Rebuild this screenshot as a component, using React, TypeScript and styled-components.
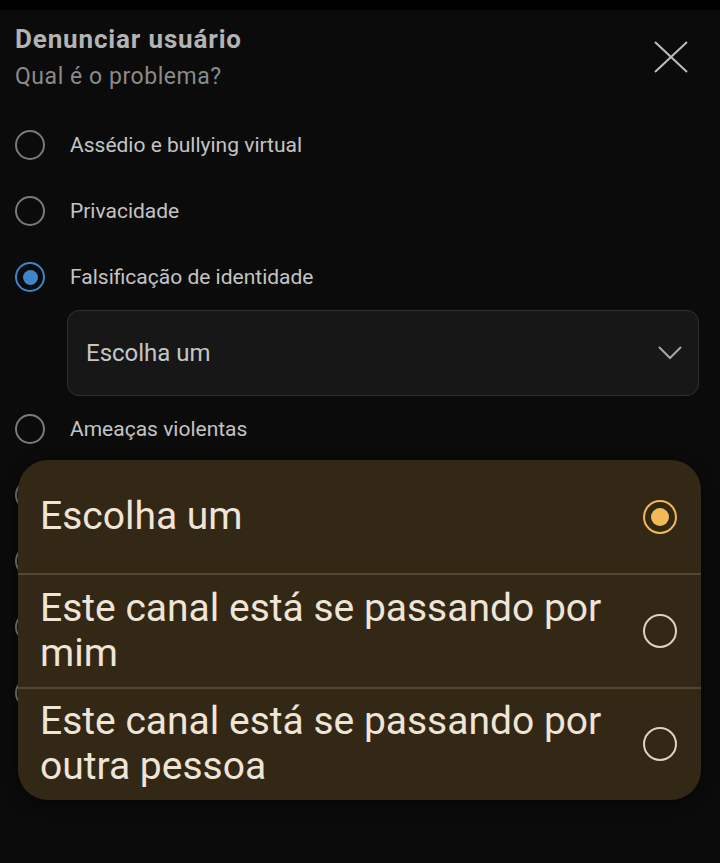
import React from "react";
import styled, { createGlobalStyle } from "styled-components";

const GlobalStyle = createGlobalStyle`
  html, body {
    margin: 0;
    padding: 0;
    background: #0b0b0b;
    font-family: Roboto, "Noto Sans", "Liberation Sans", sans-serif;
  }
  * { box-sizing: border-box; }
`;

const Screen = styled.div`
  position: relative;
  width: 720px;
  height: 863px;
  overflow: hidden;
  background: #0b0b0b;
`;

const StatusBar = styled.div`
  height: 10px;
  background: #000;
`;

const Sheet = styled.div`
  padding: 14px 21px 0 15px;
`;

const Header = styled.div`
  display: flex;
  justify-content: space-between;
  align-items: flex-start;
`;

const TitleBlock = styled.div`
  display: flex;
  flex-direction: column;
  gap: 8px;
`;

const Title = styled.h1`
  margin: 0;
  font-size: 26px;
  line-height: 30px;
  font-weight: 700;
  letter-spacing: 0.85px;
  color: #b3b3b3;
`;

const Subtitle = styled.p`
  margin: 0;
  font-size: 23px;
  line-height: 30px;
  letter-spacing: 0.55px;
  color: #8a8a8a;
`;

const CloseButton = styled.button`
  margin: 17px 11px 0 0;
  padding: 0;
  width: 34px;
  height: 32px;
  border: 0;
  background: transparent;
  display: flex;
  align-items: center;
  justify-content: center;
`;

const List = styled.div`
  margin-top: 20px;
  display: flex;
  flex-direction: column;
`;

const Row = styled.div`
  height: 66px;
  display: flex;
  align-items: center;
  gap: 25px;
`;

const Radio = styled.span<{ $checked?: boolean }>`
  flex: none;
  width: 30px;
  height: 30px;
  border-radius: 50%;
  border: 2.5px solid ${(p) => (p.$checked ? "#3d86c9" : "#7a7a7a")};
  display: flex;
  align-items: center;
  justify-content: center;
  &::after {
    content: "";
    display: ${(p) => (p.$checked ? "block" : "none")};
    width: 15px;
    height: 15px;
    border-radius: 50%;
    background: #3d86c9;
  }
`;

const RowLabel = styled.span`
  font-size: 21px;
  color: #c4c4c4;
`;

const Select = styled.div`
  margin-left: 52px;
  height: 86px;
  border-radius: 12px;
  border: 1px solid #303030;
  background: #171717;
  display: flex;
  align-items: center;
  justify-content: space-between;
  padding: 0 16px 0 18px;
`;

const SelectText = styled.span`
  font-size: 24px;
  color: #c6c6c6;
`;

const Popup = styled.div`
  position: absolute;
  top: 460px;
  left: 18px;
  width: 683px;
  border-radius: 30px;
  background: #332716;
  overflow: hidden;
  box-shadow: 0 4px 16px rgba(0, 0, 0, 0.5);
`;

const PopupItem = styled.div`
  height: 113.3px;
  display: flex;
  align-items: center;
  justify-content: space-between;
  padding: 0 24px 0 22px;
  gap: 20px;
  & + & {
    border-top: 2px solid #54462f;
  }
`;

const PopupText = styled.span`
  font-size: 39px;
  line-height: 45px;
  color: #efe5d6;
  max-width: 580px;
`;

const PopupRadio = styled.span<{ $checked?: boolean }>`
  flex: none;
  width: 34px;
  height: 34px;
  border-radius: 50%;
  border: 2.5px solid ${(p) => (p.$checked ? "#f4b957" : "#ddd2c3")};
  display: flex;
  align-items: center;
  justify-content: center;
  &::after {
    content: "";
    display: ${(p) => (p.$checked ? "block" : "none")};
    width: 18px;
    height: 18px;
    border-radius: 50%;
    background: #f4b957;
  }
`;

const options = [
  "Assédio e bullying virtual",
  "Privacidade",
  "Falsificação de identidade",
];

const moreOptions = [
  "Ameaças violentas",
  "Ameaças a crianças",
  "Discurso de ódio",
  "Spam e golpes",
  "Nenhuma das opções",
];

const choices = [
  "Escolha um",
  "Este canal está se passando por mim",
  "Este canal está se passando por outra pessoa",
];

export default function App() {
  return (
    <>
      <GlobalStyle />
      <Screen>
        <StatusBar />
        <Sheet>
          <Header>
            <TitleBlock>
              <Title>Denunciar usuário</Title>
              <Subtitle>Qual é o problema?</Subtitle>
            </TitleBlock>
            <CloseButton aria-label="Fechar">
              <svg width="34" height="32" viewBox="0 0 34 32">
                <path d="M1 1 L33 31 M33 1 L1 31" stroke="#bdbdbd" strokeWidth="2" fill="none" />
              </svg>
            </CloseButton>
          </Header>
          <List>
            {options.map((o, i) => (
              <Row key={o}>
                <Radio $checked={i === 2} />
                <RowLabel>{o}</RowLabel>
              </Row>
            ))}
            <Select>
              <SelectText>Escolha um</SelectText>
              <svg width="24" height="14" viewBox="0 0 24 14">
                <path d="M1 1 L12 12 L23 1" stroke="#a8a8a8" strokeWidth="2" fill="none" />
              </svg>
            </Select>
            {moreOptions.map((o) => (
              <Row key={o}>
                <Radio />
                <RowLabel>{o}</RowLabel>
              </Row>
            ))}
          </List>
        </Sheet>
        <Popup>
          {choices.map((c, i) => (
            <PopupItem key={c}>
              <PopupText>{c}</PopupText>
              <PopupRadio $checked={i === 0} />
            </PopupItem>
          ))}
        </Popup>
      </Screen>
    </>
  );
}
